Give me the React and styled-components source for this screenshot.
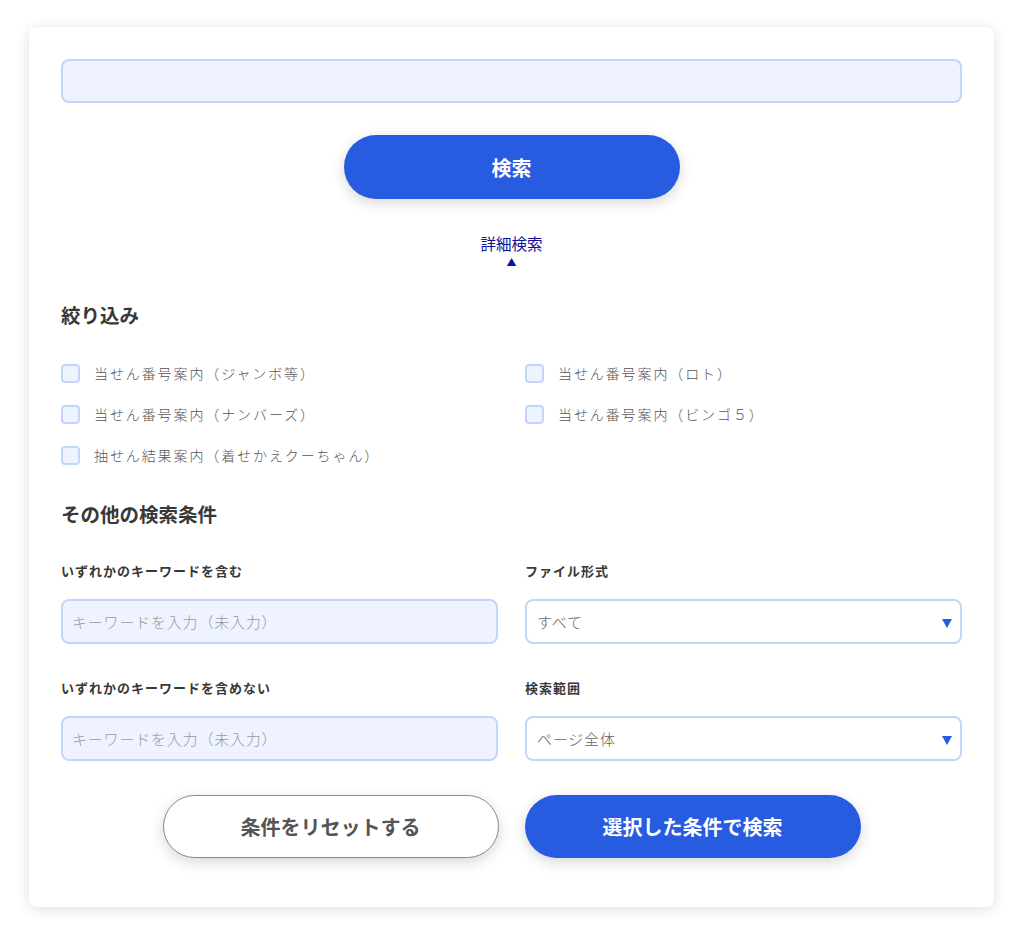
import React from 'react';
import styled, { createGlobalStyle } from 'styled-components';

const GlobalStyle = createGlobalStyle`
  body {
    margin: 0;
    background: #fff;
    font-family: "Noto Sans CJK JP", "Noto Sans", sans-serif;
    color: #333;
  }
`;

const filters = [
  '当せん番号案内（ジャンボ等）',
  '当せん番号案内（ロト）',
  '当せん番号案内（ナンバーズ）',
  '当せん番号案内（ビンゴ５）',
  '抽せん結果案内（着せかえクーちゃん）',
];

const App = () => {
  return (
    <>
      <GlobalStyle />
      <Page>
        <Card>
          <MainInput type="text" />
          <Center>
            <PrimaryButton>検索</PrimaryButton>
          </Center>
          <Toggle>
            <span>詳細検索</span>
            <Arrow>▲</Arrow>
          </Toggle>

          <Heading>絞り込み</Heading>
          <CheckGrid>
            {filters.map((f) => (
              <CheckItem key={f}>
                <Box />
                <span>{f}</span>
              </CheckItem>
            ))}
          </CheckGrid>

          <Heading>その他の検索条件</Heading>
          <FieldGrid>
            <Field>
              <Label>いずれかのキーワードを含む</Label>
              <TextInput placeholder="キーワードを入力（未入力）" />
            </Field>
            <Field>
              <Label>ファイル形式</Label>
              <Select>
                すべて
                <Caret />
              </Select>
            </Field>
            <Field>
              <Label>いずれかのキーワードを含めない</Label>
              <TextInput placeholder="キーワードを入力（未入力）" />
            </Field>
            <Field>
              <Label>検索範囲</Label>
              <Select>
                ページ全体
                <Caret />
              </Select>
            </Field>
          </FieldGrid>

          <Actions>
            <GhostButton>条件をリセットする</GhostButton>
            <PrimaryButton $small>選択した条件で検索</PrimaryButton>
          </Actions>
        </Card>
      </Page>
    </>
  );
};

export default App;

const Page = styled.div`
  padding: 27px 29px 32px 29px;
`;

const Card = styled.div`
  background: #fff;
  border-radius: 8px;
  box-shadow: 0 2px 14px rgba(0, 0, 0, 0.13);
  padding: 32px 32px 49px;
`;

const MainInput = styled.input`
  display: block;
  box-sizing: border-box;
  width: 100%;
  height: 44px;
  background: #eef3ff;
  border: 2px solid #c3d5fb;
  border-radius: 8px;
  outline: none;
`;

const Center = styled.div`
  display: flex;
  justify-content: center;
  margin-top: 32px;
`;

const PrimaryButton = styled.button`
  width: 336px;
  height: ${(p) => (p.$small ? '63px' : '64px')};
  border: none;
  border-radius: 32px;
  background: #285ce0;
  color: #fff;
  font-family: inherit;
  font-size: 20px;
  font-weight: 700;
  box-shadow: 0 4px 14px rgba(0, 0, 0, 0.16);
  cursor: pointer;
`;

const GhostButton = styled(PrimaryButton)`
  background: #fff;
  color: #555;
  border: 1px solid #888;
  height: 63px;
`;

const Toggle = styled.div`
  display: flex;
  flex-direction: column;
  align-items: center;
  margin-top: 33px;
  color: #10109e;
  font-size: 15.5px;
  line-height: 22px;
`;

const Arrow = styled.span`
  font-size: 10px;
  line-height: 10px;
  margin-top: 3px;
`;

const Heading = styled.h2`
  margin: 34px 0 0;
  font-size: 19.5px;
  font-weight: 700;
  color: #383838;
  line-height: 28px;
`;

const CheckGrid = styled.div`
  display: grid;
  grid-template-columns: 1fr 1fr;
  column-gap: 27px;
  row-gap: 19px;
  margin-top: 33px;
`;

const CheckItem = styled.label`
  display: flex;
  align-items: center;
  gap: 14px;
  font-size: 14px;
  font-weight: 300;
  letter-spacing: 1.9px;
  color: #555;
  line-height: 22px;
`;

const Box = styled.span`
  width: 19px;
  height: 19px;
  box-sizing: border-box;
  border: 2px solid #c3d5fb;
  border-radius: 4px;
  background: #eef3ff;
  flex-shrink: 0;
`;

const FieldGrid = styled.div`
  display: grid;
  grid-template-columns: 1fr 1fr;
  column-gap: 27px;
  row-gap: 34px;
  margin-top: 33px;
`;

const Field = styled.div`
  display: flex;
  flex-direction: column;
  gap: 18px;
`;

const Label = styled.div`
  font-size: 13px;
  font-weight: 700;
  letter-spacing: 1px;
  color: #383838;
  line-height: 20px;
`;

const TextInput = styled.input`
  box-sizing: border-box;
  height: 45px;
  width: 100%;
  background: #eef3ff;
  border: 2px solid #c3d5fb;
  border-radius: 8px;
  padding: 0 9px;
  font-family: inherit;
  font-size: 15px;
  font-weight: 300;
  letter-spacing: 0.8px;
  outline: none;
  &::placeholder {
    color: #999;
  }
`;

const Select = styled.div`
  position: relative;
  box-sizing: border-box;
  height: 45px;
  display: flex;
  align-items: center;
  background: #fff;
  border: 2px solid #c3d5fb;
  border-radius: 8px;
  padding: 0 10px;
  font-size: 15px;
  font-weight: 300;
  letter-spacing: 0.8px;
  color: #666;
`;

const Caret = styled.span`
  position: absolute;
  right: 8px;
  top: 18px;
  width: 0;
  height: 0;
  border-left: 5px solid transparent;
  border-right: 5px solid transparent;
  border-top: 9px solid #285ce0;
`;

const Actions = styled.div`
  display: flex;
  justify-content: center;
  gap: 26px;
  margin-top: 34px;
`;
